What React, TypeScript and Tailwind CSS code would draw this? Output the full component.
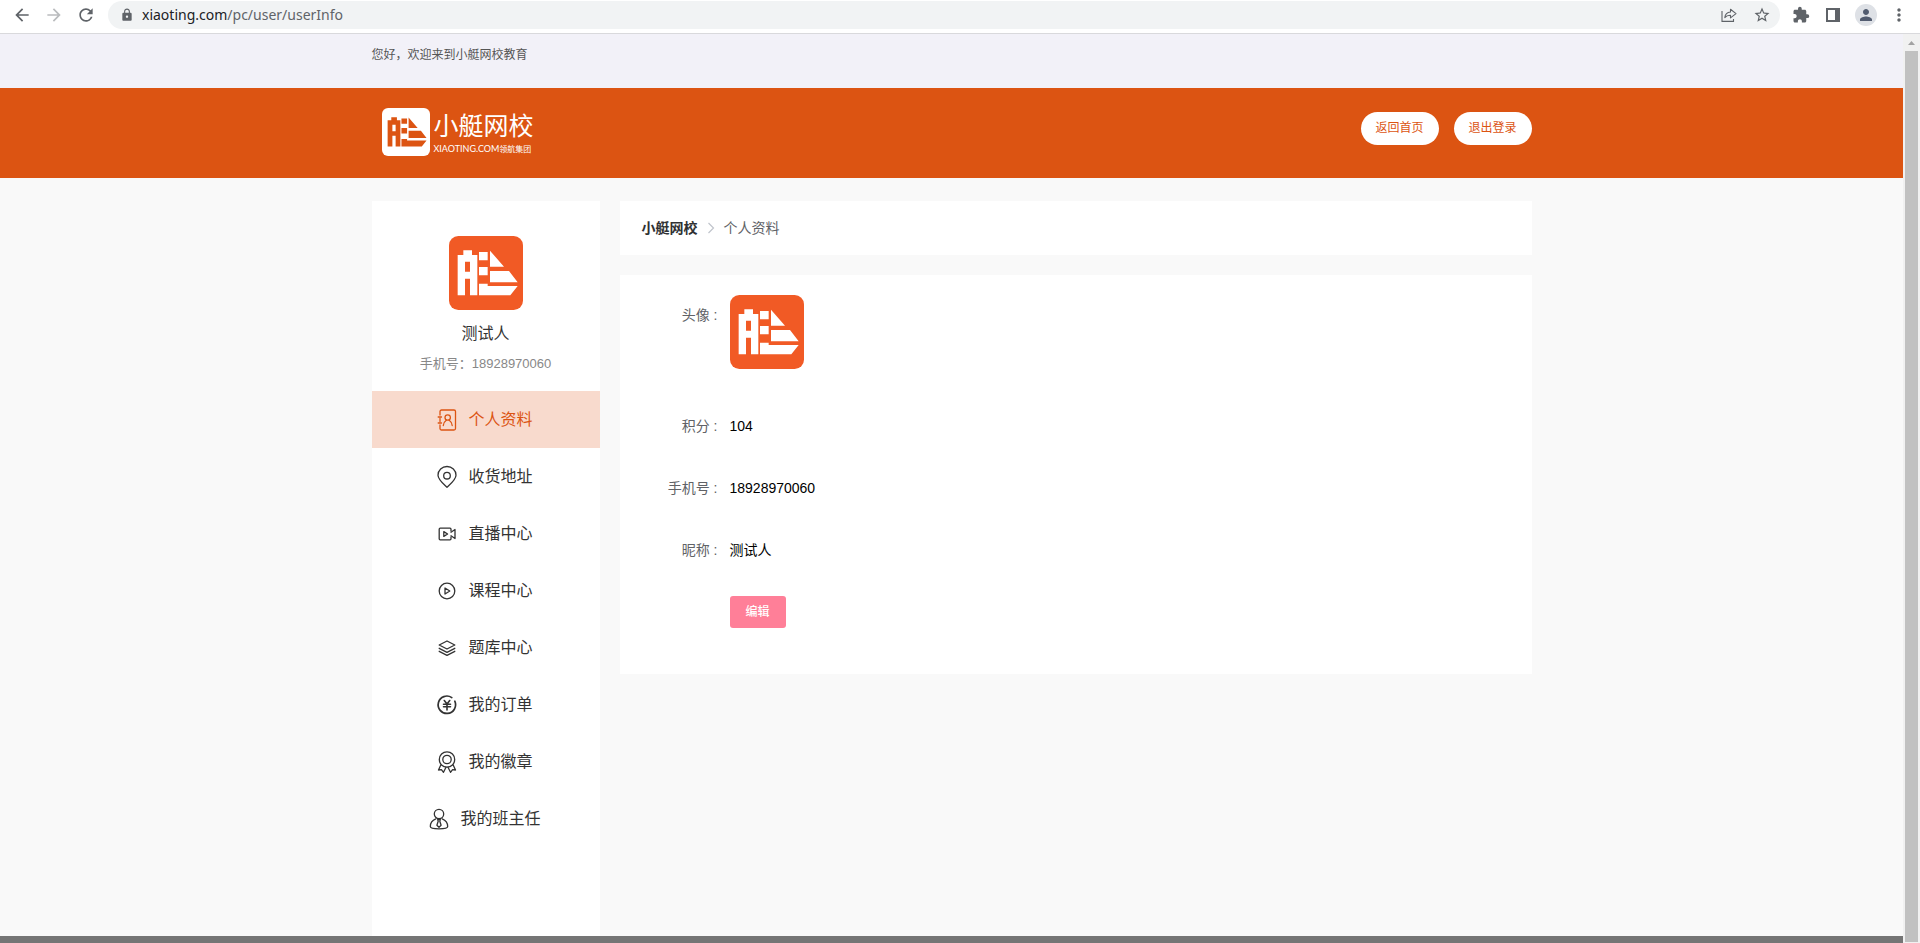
import type { ReactNode } from "react";
import {
  MdArrowBack,
  MdArrowForward,
  MdExtension,
  MdLock,
  MdMoreVert,
  MdPerson,
  MdRefresh,
  MdStarBorder,
} from "react-icons/md";
import clsx from "clsx";

const profile = {
  name: "测试人",
  phone: "18928970060",
  points: 104,
};

export default function App() {
  return (
    <div className="flex h-screen flex-col overflow-hidden bg-white font-['Liberation_Sans','Noto_Sans_CJK_SC',sans-serif]">
      <BrowserBar />
      <div className="flex min-h-0 flex-1">
        <div className="flex min-w-0 flex-1 flex-col bg-[#f9f9f9]">
          <TopBar />
          <SiteHeader />
          <main className="mx-auto flex w-full max-w-[1160px] flex-1 gap-5 pt-[23px]">
            <Sidebar />
            <div className="flex-1 space-y-5">
              <Breadcrumb />
              <ProfileCard />
            </div>
          </main>
          <footer className="h-[7px] bg-[#757575]" />
        </div>
        <Scrollbar />
      </div>
    </div>
  );
}

function BrowserBar() {
  return (
    <div className="flex h-[34px] shrink-0 items-center border-b border-[#d9d9dc] bg-white pb-1 text-[#5f6368]">
      <div className="flex items-center gap-3 px-3">
        <button aria-label="Back">
          <MdArrowBack className="size-5" />
        </button>
        <button aria-label="Forward" className="text-[#babcbe]">
          <MdArrowForward className="size-5" />
        </button>
        <button aria-label="Reload">
          <MdRefresh className="size-5" />
        </button>
      </div>
      <div className="flex h-7 flex-1 items-center rounded-full bg-[#f1f3f4] pr-[9px] pl-3">
        <MdLock className="mr-2 size-3.5" />
        <a href="#" className="flex-1 font-['Noto_Sans','Open_Sans',sans-serif] text-sm">
          <span className="text-[#202124]">xiaoting.com</span>/pc/user/userInfo
        </a>
        <div className="flex items-center gap-4">
          <button aria-label="Share">
            <ShareIcon />
          </button>
          <button aria-label="Bookmark">
            <MdStarBorder className="size-[18px]" />
          </button>
        </div>
      </div>
      <div className="flex items-center gap-3 px-[11px]">
        <button aria-label="Extensions" className="flex w-5 justify-center">
          <MdExtension className="size-[18px]" />
        </button>
        <button aria-label="Side panel" className="flex w-5 justify-center">
          <svg viewBox="0 0 14 14" className="size-3.5">
            <path d="M0 0h14v14H0zM2 2v10h7V2z" fill="currentColor" fillRule="evenodd" />
          </svg>
        </button>
        <button
          aria-label="Account"
          className="flex size-[22px] items-center justify-center rounded-full bg-[#dee1e6] text-[#525c70]"
        >
          <MdPerson className="size-[18px]" />
        </button>
        <button aria-label="Menu">
          <MdMoreVert className="size-5" />
        </button>
      </div>
    </div>
  );
}

function ShareIcon() {
  return (
    <svg viewBox="0 0 16 16" className="size-4" fill="none" stroke="currentColor" strokeWidth="1.1">
      <path d="M1 4v10.4h11.5V12" />
      <path
        d="M3.8 10.6c.4-3.6 2.6-5.4 5.7-5.6V2.2L15 6.6l-5.5 4.3V8.2C7 8.1 5.2 8.8 3.8 10.6z"
        strokeLinejoin="round"
      />
    </svg>
  );
}

function Scrollbar() {
  return (
    <div className="flex w-[17px] shrink-0 flex-col items-center bg-[#f1f1f1] pb-px">
      <svg viewBox="0 0 17 17" className="size-[17px] shrink-0" fill="#a3a3a3">
        <path d="M5 11h7L8.5 7z" />
      </svg>
      <div className="w-[13px] flex-1 bg-[#c1c1c1]" />
    </div>
  );
}

function TopBar() {
  return (
    <div className="h-[54px] shrink-0 bg-[#f2f1f8]">
      <p className="mx-auto max-w-[1160px] text-xs leading-[42px] text-[#555]">您好，欢迎来到小艇网校教育</p>
    </div>
  );
}

function SiteHeader() {
  return (
    <header className="h-[90px] shrink-0 bg-[#dc5412]">
      <div className="mx-auto flex max-w-[1160px] justify-between">
        <a href="#" className="flex items-start gap-1 pt-5 pl-2.5 text-white">
          <BoatLogo className="size-12 text-white" shape="#dc5412" />
          <span className="flex flex-col">
            <span className="text-[25px] leading-[36px]">小艇网校</span>
            <span className="flex font-[Lato,'Noto_Sans_CJK_SC',sans-serif] leading-[10px] whitespace-nowrap">
              <span className="text-[9px]">XIAOTING.COM</span>
              <span className="text-[8px]">领航集团</span>
            </span>
          </span>
        </a>
        <div className="flex gap-[15px] pt-6">
          {["返回首页", "退出登录"].map((label) => (
            <button
              key={label}
              className="h-[33px] w-[78px] rounded-full bg-white pb-0.5 text-xs text-[#dc5412]"
            >
              {label}
            </button>
          ))}
        </div>
      </div>
    </header>
  );
}

// Rounded tile with the boat mark
function BoatLogo({ className, shape = "#fff" }: { className?: string; shape?: string }) {
  return (
    <svg viewBox="0 0 222 222" className={clsx("shrink-0", className)} aria-hidden="true">
      <rect width="222" height="222" rx="28" fill="currentColor" />
      <g fill={shape}>
        <path
          fillRule="evenodd"
          d="M26 57h17V43h26v14h16v121H63v-50H48v50H26zM48 77v30h15V77z"
        />
        <path d="M90 48h26v25H90zM90 93h26v25H90z" />
        <path d="M123 44l42 48h-42zM123 105h57l26 34h-83z" />
        <path d="M90 143h26v7h90l-22 28H90z" />
      </g>
    </svg>
  );
}

function Sidebar() {
  return (
    <aside className="w-[228px] shrink-0 bg-white">
      <div className="flex h-[190px] flex-col items-center pt-[35px]">
        <BoatLogo className="size-[74px] text-[#f15a25]" />
        <p className="mt-3 text-base leading-6 text-[#333]">{profile.name}</p>
        <p className="mt-2 text-[13px] leading-5 text-[#888]">手机号：{profile.phone}</p>
      </div>
      <nav>
        {menu.map((item, i) => (
          <a
            key={item.label}
            href="#"
            className={clsx(
              "flex h-[57px] items-center justify-center gap-3 text-base",
              i === 0 ? "bg-[#f8dacd] text-[#dc5412]" : "text-[#333]"
            )}
          >
            <svg
              viewBox="1 0 18 22"
              className="h-[22px] w-[18px] overflow-visible"
              fill="none"
              stroke="currentColor"
              strokeWidth="1.3"
              strokeLinecap="round"
              strokeLinejoin="round"
            >
              {item.icon}
            </svg>
            {item.label}
          </a>
        ))}
      </nav>
    </aside>
  );
}

const menu: { label: string; icon: ReactNode }[] = [
  {
    label: "个人资料",
    icon: (
      <>
        <path d="M3 6V2.5A1.5 1.5 0 0 1 4.5 1H17a1.5 1.5 0 0 1 1.500 1.5v17A1.5 1.5 0 0 1 17 21H4.5A1.5 1.5 0 0 1 3 19.5V16" />
        <path d="M3 9.5v3M1.2 8h3.3M1.2 14h3.3" />
        <circle cx="10.7" cy="8.5" r="2.7" />
        <path d="M6.3 16.5c.2-2.700 1.7-4.3 3-5.2M15.2 16.5c-.2-2.7-1.7-4.3-3-5.2" />
      </>
    ),
  },
  {
    label: "收货地址",
    icon: (
      <>
        <path d="M10 21.3C5 16.6 1 13.3 1 9.2a9 8.7 0 0 1 18 0c0 4.1-4 7.4-9 12.1z" />
        <circle cx="10" cy="9.7" r="3.3" />
      </>
    ),
  },
  {
    label: "直播中心",
    icon: (
      <>
        <path d="M14 8V6.2a1 1 0 0 0-1-1H3.200a1 1 0 0 0-1 1v9.600a1 1 0 0 0 1 1H13a1 1 0 0 0 1-1V14" />
        <path d="M14 9.2l4-2.7v9l-4-2.7" />
        <path d="M6.8 8.6v4.8l3.8-2.4z" />
      </>
    ),
  },
  {
    label: "课程中心",
    icon: (
      <>
        <circle cx="10" cy="11" r="7.8" />
        <path d="M8 8v6l4.800-3z" />
      </>
    ),
  },
  {
    label: "题库中心",
    icon: (
      <>
        <path d="M10 4l7.800 4-7.800 4-7.800-4z" />
        <path d="M2.2 11.3l7.8 4 7.8-4M2.2 14.3l7.8 4 7.8-4" />
      </>
    ),
  },
  {
    label: "我的订单",
    icon: (
      <>
        <path d="M14.8 3.6A8.7 8.7 0 1 0 17.8 7.2" strokeWidth="1.7" />
        <path d="M7.3 6.5l2.7 3.5 2.7-3.5M6.5 10.3h7M6.5 12.8h7M10 10v6" strokeWidth="1.6" />
      </>
    ),
  },
  {
    label: "我的徽章",
    icon: (
      <>
        <circle cx="10" cy="8.5" r="7.7" />
        <circle cx="10" cy="8.5" r="4.2" />
        <path d="M3.8 14L1.5 19l2.9-.4L6.5 21.3l2.5-5M16.2 14l2.3 5-2.9-.4-2.1 2.7-2.5-5" />
      </>
    ),
  },
  {
    label: "我的班主任",
    icon: (
      <>
        <circle cx="10" cy="6" r="4.7" />
        <path d="M6.8 10.8C3.3 12.2 1.3 15.2 1.3 18.5c0 1.6 3.7 2.3 8.7 2.3s8.7-.7 8.7-2.3c0-3.3-2-6.3-5.5-7.7" />
        <path d="M8.7 11.5h2.6l-.5 1.8 1.3 4-2.1 2-2.1-2 1.3-4z" />
      </>
    ),
  },
];

function Breadcrumb() {
  return (
    <nav className="flex h-[54px] items-center bg-white px-[22px] text-sm">
      <a href="#" className="font-bold text-[#303133]">
        小艇网校
      </a>
      <svg viewBox="0 0 14 14" className="mx-1.5 size-3.5" fill="none" stroke="#c0c4cc" strokeWidth="1.2">
        <path d="M4.5 2l5 5-5 5" />
      </svg>
      <span className="text-[#606266]">个人资料</span>
    </nav>
  );
}

function ProfileCard() {
  return (
    <section className="space-y-[22px] bg-white px-5 pt-5 pb-[42px] text-sm">
      <Row label="头像">
        <div className="h-[89px]">
          <BoatLogo className="size-[74px] text-[#f15a25]" />
        </div>
      </Row>
      <Row label="积分">{profile.points}</Row>
      <Row label="手机号">{profile.phone}</Row>
      <Row label="昵称">{profile.name}</Row>
      <div className="flex h-10 items-center pl-[90px]">
        <button className="h-8 w-14 rounded-[3px] bg-[#ff7f98] text-xs font-medium text-white">编辑</button>
      </div>
    </section>
  );
}

function Row({ label, children }: { label: string; children: ReactNode }) {
  return (
    <dl className="flex leading-10">
      <dt className="w-[90px] pr-3 text-right text-[#606266]">{label} :</dt>
      <dd className="text-black">{children}</dd>
    </dl>
  );
}
